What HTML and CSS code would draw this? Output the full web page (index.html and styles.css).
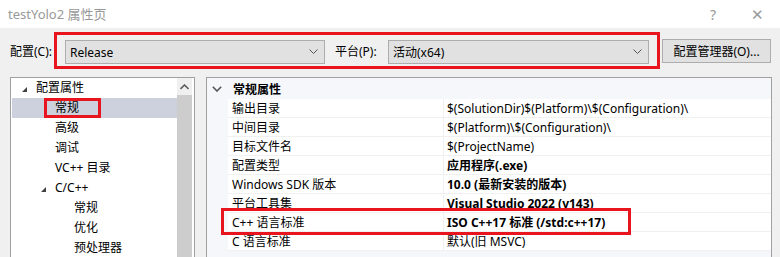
FILE: index.html
```html
<!DOCTYPE html>
<html lang="zh-CN">
<head>
  <meta charset="UTF-8" />
  <title>testYolo2 属性页</title>
  <link rel="stylesheet" href="styles.css">
</head>
<body>
  <div class="titlebar">
    <span class="title">testYolo2 属性页</span>
    <span class="title-btn help">?</span>
    <span class="title-btn close">&#x2715;</span>
  </div>

  <div class="dialog">
    <div class="config-row">
      <span class="label">配置(C):</span>
      <div class="mark-box">
        <div class="combo combo-config">
          <span>Release</span>
          <svg class="chev" width="9" height="6" viewBox="0 0 9 6"><path d="M0.5 0.5 L4.5 4.5 L8.5 0.5" fill="none" stroke="#555" stroke-width="1"/></svg>
        </div>
        <span class="label platform-label">平台(P):</span>
        <div class="combo combo-platform">
          <span>活动(x64)</span>
          <svg class="chev" width="9" height="6" viewBox="0 0 9 6"><path d="M0.5 0.5 L4.5 4.5 L8.5 0.5" fill="none" stroke="#555" stroke-width="1"/></svg>
        </div>
      </div>
      <button class="btn">配置管理器(O)...</button>
    </div>

    <div class="panes">
      <div class="tree">
        <ul class="tree-list">
          <li class="node lvl0"><i class="tri"></i>配置属性</li>
          <li class="node lvl1 selected"><span class="mark">常规</span></li>
          <li class="node lvl1">高级</li>
          <li class="node lvl1">调试</li>
          <li class="node lvl1">VC++ 目录</li>
          <li class="node lvl1"><i class="tri"></i>C/C++</li>
          <li class="node lvl2">常规</li>
          <li class="node lvl2">优化</li>
          <li class="node lvl2">预处理器</li>
        </ul>
        <div class="scrollbar">
          <div class="sb-up">
            <svg width="9" height="6" viewBox="0 0 9 6"><path d="M0.5 5 L4.5 1 L8.5 5" fill="none" stroke="#606060" stroke-width="1.6"/></svg>
          </div>
          <div class="sb-thumb"></div>
        </div>
      </div>

      <div class="grid">
        <div class="grid-head">
          <svg class="head-chev" width="10" height="6" viewBox="0 0 10 6"><path d="M0.8 0.8 L5 5 L9.2 0.8" fill="none" stroke="#555" stroke-width="1.6"/></svg>
          <span>常规属性</span>
        </div>
        <div class="row"><span class="name">输出目录</span><span class="value">$(SolutionDir)$(Platform)\$(Configuration)\</span></div>
        <div class="row"><span class="name">中间目录</span><span class="value">$(Platform)\$(Configuration)\</span></div>
        <div class="row"><span class="name">目标文件名</span><span class="value">$(ProjectName)</span></div>
        <div class="row"><span class="name">配置类型</span><span class="value bold">应用程序(.exe)</span></div>
        <div class="row"><span class="name">Windows SDK 版本</span><span class="value bold">10.0 (最新安装的版本)</span></div>
        <div class="row"><span class="name">平台工具集</span><span class="value bold">Visual Studio 2022 (v143)</span></div>
        <div class="row marked"><span class="name">C++ 语言标准</span><span class="value bold">ISO C++17 标准 (/std:c++17)</span></div>
        <div class="row"><span class="name">C 语言标准</span><span class="value">默认(旧 MSVC)</span></div>
      </div>
    </div>
  </div>
</body>
</html>
```

FILE: styles.css
```css
body {
  margin: 0;
  font-family: "Noto Sans", "Noto Sans CJK SC", sans-serif;
  font-size: 12px;
  color: #000;
  background-color: #f0f0f0;
  overflow: hidden;
}
.titlebar {
  height: 28px;
  background-color: #fff;
  display: flex;
  align-items: center;
  padding-left: 8px;
  color: #999;
}
.title {
  flex: 1;
  font-size: 13px;
  margin-top: -2px;
}
.title-btn {
  width: 44px;
  text-align: center;
  color: #999;
  font-size: 14px;
}
.close {
  font-size: 15px;
  margin-right: 1px;
}

/* fila de configuracion */
.config-row {
  display: flex;
  align-items: flex-start;
  padding: 4px 0 0 10px;
  height: 45px;
}
.label {
  line-height: 24px;
  margin-top: 8px;
}
.config-row > .label {
  width: 44px;
}
.mark-box {
  display: flex;
  border: 3px solid #e8141e;
  padding: 5px 8px 2px 8px;
}
.mark-box .label {
  margin-top: 0;
}
.combo {
  border: 1px solid #adadad;
  background-color: #e1e1e1;
  display: flex;
  align-items: center;
  justify-content: space-between;
  padding: 0 6px 0 4px;
  box-sizing: border-box;
  height: 24px;
}
.combo-config {
  width: 260px;
}
.platform-label {
  margin: 0 0 0 10px;
  width: 53px;
}
.combo-platform {
  width: 261px;
}
.chev {
  display: block;
}
.btn {
  margin: 7px 0 0 2px;
  width: 109px;
  height: 24px;
  border: 1px solid #adadad;
  background-color: #e1e1e1;
  font-family: inherit;
  font-size: 12px;
  padding: 0;
}

/* paneles */
.panes {
  display: flex;
  padding-left: 10px;
  gap: 11px;
}
.tree {
  width: 183px;
  height: 190px;
  border: 1px solid #a0a0a0;
  background-color: #fff;
  display: flex;
}
.tree-list {
  list-style: none;
  margin: 0;
  padding: 0 0 0 1px;
  flex: 1;
}
.node {
  height: 20px;
  line-height: 20px;
  position: relative;
}
.lvl0 { padding-left: 24px; }
.lvl1 { padding-left: 43px; }
.lvl2 { padding-left: 62px; }
.selected {
  background-color: #cdd0dd;
}
.tri {
  position: absolute;
  top: 9px;
  width: 0;
  height: 0;
  border-left: 5px solid transparent;
  border-bottom: 5px solid #404040;
}
.lvl0 .tri { left: 10px; }
.lvl1 .tri { left: 29px; }
.mark {
  display: inline-block;
  position: relative;
}
.mark::after {
  content: "";
  position: absolute;
  left: -11px;
  top: 0;
  width: 51px;
  height: 14px;
  border: 3px solid #e8141e;
}
.scrollbar {
  width: 15px;
  margin-right: 2px;
  display: flex;
  flex-direction: column;
  background-color: #f0f0f0;
}
.sb-up {
  height: 17px;
  display: flex;
  align-items: center;
  justify-content: center;
}
.sb-up svg { display: block; }
.sb-thumb {
  flex: 1;
  background-color: #cdcdcd;
}

/* cuadricula de propiedades */
.grid {
  width: 564px;
  height: 190px;
  border: 1px solid #a0a0a0;
  background-color: #f5f7fb;
}
.grid-head {
  height: 21px;
  display: flex;
  align-items: center;
  font-weight: bold;
}
.head-chev {
  margin: 0 11px 0 5px;
  display: block;
}
.row {
  margin-left: 21px;
  height: 18px;
  line-height: 19px;
  background-color: #fff;
  border-bottom: 1px solid #f0f0f0;
  display: flex;
  position: relative;
}
.name {
  width: 211px;
  padding-left: 4px;
  border-right: 1px solid #f0f0f0;
}
.value {
  padding-left: 3px;
}
.bold {
  font-weight: bold;
}
.marked::after {
  content: "";
  position: absolute;
  z-index: 1;
  left: -7px;
  top: -5px;
  width: 404px;
  height: 21px;
  border: 3px solid #e8141e;
}
```
